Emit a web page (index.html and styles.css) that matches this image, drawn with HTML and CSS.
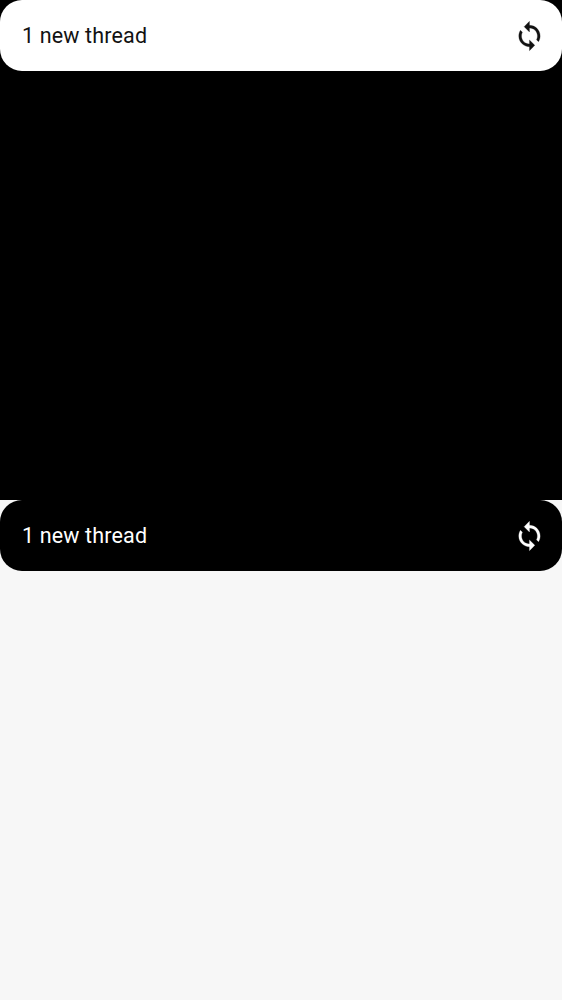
FILE: index.html
```html
<!DOCTYPE html>
<html lang="en">
<head>
<meta charset="utf-8">
<title>Threads</title>
<link rel="stylesheet" href="styles.css">
</head>
<body>
<section class="panel panel-dark">
  <div class="banner banner-light">
    <span class="label">1 new thread</span>
    <svg class="sync" viewBox="-0.35 0 24 24"><path d="M12 4V1L8 5l4 4V6c3.31 0 6 2.69 6 6 0 1.01-.25 1.97-.7 2.8l1.46 1.46C19.54 15.03 20 13.57 20 12c0-4.42-3.58-8-8-8zm0 14c-3.31 0-6-2.69-6-6 0-1.01.25-1.97.7-2.8L5.24 7.74C4.46 8.97 4 10.43 4 12c0 4.42 3.58 8 8 8v3l4-4-4-4v3z"/></svg>
  </div>
</section>
<section class="panel panel-light">
  <div class="banner banner-dark">
    <span class="label">1 new thread</span>
    <svg class="sync" viewBox="-0.35 0 24 24"><path d="M12 4V1L8 5l4 4V6c3.31 0 6 2.69 6 6 0 1.01-.25 1.97-.7 2.8l1.46 1.46C19.54 15.03 20 13.57 20 12c0-4.42-3.58-8-8-8zm0 14c-3.31 0-6-2.69-6-6 0-1.01.25-1.97.7-2.8L5.24 7.74C4.46 8.97 4 10.43 4 12c0 4.42 3.58 8 8 8v3l4-4-4-4v3z"/></svg>
  </div>
</section>
</body>
</html>
```
FILE: styles.css
```css
body { margin: 0; font-family: Roboto, sans-serif; }
.panel { height: 500px; }
.panel-dark { background: #000; }
.panel-light { background: #f7f7f7; }
.banner {
  box-sizing: border-box;
  height: 71px;
  padding: 0 17px 0 22px;
  border-radius: 22px;
  display: flex;
  align-items: center;
  justify-content: space-between;
}
.banner-light { background: #fff; color: #121212; }
.banner-dark { background: #000; color: #fff; }
.label { font-size: 21.5px; line-height: 26px; letter-spacing: 0.15px; }
.sync {
  width: 32px;
  height: 32px;
  fill: currentColor;
  stroke: currentColor;
  stroke-width: 0.2;
}
```
